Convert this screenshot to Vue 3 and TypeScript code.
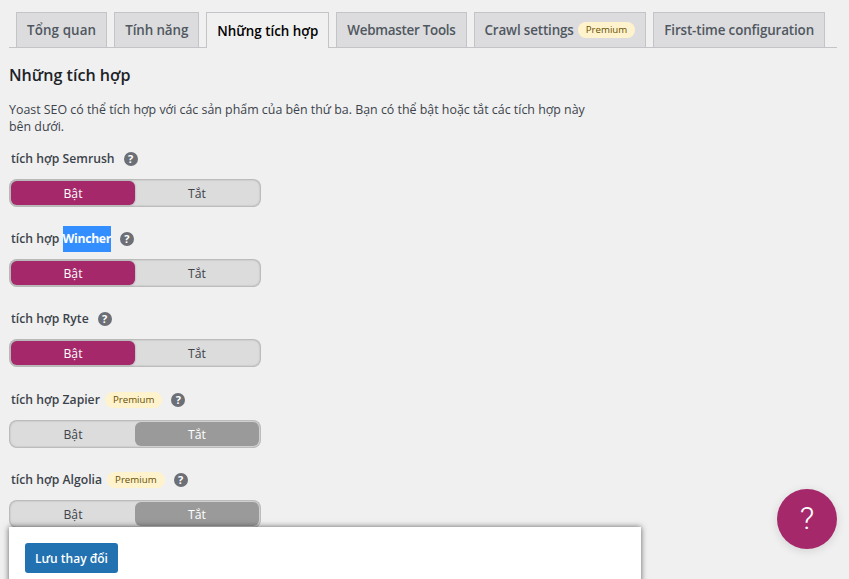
<script setup lang="ts">
interface Row { name: string; premium: boolean; on: boolean; selected?: boolean }
const tabs = [
  { label: 'Tổng quan', spacing: 0.1 },
  { label: 'Tính năng', spacing: -0.1 },
  { label: 'Những tích hợp', active: true, spacing: 0 },
  { label: 'Webmaster Tools', spacing: -0.27 },
  { label: 'Crawl settings', premium: true, spacing: -0.14 },
  { label: 'First-time configuration', spacing: -0.13 },
]
const rows: Row[] = [
  { name: 'Semrush', premium: false, on: true },
  { name: 'Wincher', premium: false, on: true, selected: true },
  { name: 'Ryte', premium: false, on: true },
  { name: 'Zapier', premium: true, on: false },
  { name: 'Algolia', premium: true, on: false },
]
</script>

<template>
  <div class="page">
    <nav class="tabs">
      <a
        v-for="t in tabs"
        :key="t.label"
        class="tab"
        :class="{ active: t.active }"
        :style="{ letterSpacing: t.spacing + 'px' }"
      >
        {{ t.label }}<span v-if="t.premium" class="badge tab-badge">Premium</span>
      </a>
    </nav>
    <h2 class="title">Những tích hợp</h2>
    <p class="desc">Yoast SEO có thể tích hợp với các sản phẩm của bên thứ ba. Bạn có thể bật hoặc tắt các tích hợp này bên dưới.</p>
    <div v-for="r in rows" :key="r.name" class="row" :class="{ isPremium: r.premium }">
      <div class="label">
        <span>tích hợp <span :class="{ sel: r.selected }">{{ r.name }}</span></span>
        <span v-if="r.premium" class="badge row-badge">Premium</span>
        <span class="hint">?</span>
      </div>
      <div class="toggle">
        <span class="opt" :class="{ onActive: r.on }">Bật</span>
        <span class="opt" :class="{ offActive: !r.on }">Tắt</span>
      </div>
    </div>
    <div class="savebar"><button class="save">Lưu thay đổi</button></div>
    <div class="beacon">?</div>
  </div>
</template>

<style>
html, body { margin: 0; background: #f0f0f1; }
</style>

<style scoped>
.page {
  position: relative;
  width: 849px;
  height: 579px;
  overflow: hidden;
  box-sizing: border-box;
  padding: 12px 12px 0 9px;
  background: #f0f0f1;
  font-family: "Open Sans", "Noto Sans", sans-serif;
  font-size: 12.5px;
  color: #3c434a;
}
.tabs {
  display: flex;
  gap: 7px;
  height: 35px;
  padding-left: 7px;
  border-bottom: 1px solid #c3c4c7;
}
.tab {
  display: flex;
  align-items: center;
  box-sizing: border-box;
  height: 35px;
  padding: 0 10px;
  border: 1px solid #c3c4c7;
  border-bottom: none;
  background: #dcdcde;
  color: #50575e;
  font-size: 13.4px;
  font-weight: 600;
  white-space: nowrap;
}
.tab.active {
  height: 36px;
  background: #f0f0f1;
  color: #000;
}
.badge {
  display: inline-block;
  background: #fff3cd;
  color: #674e00;
  border-radius: 8px;
  font-size: 9.7px;
  line-height: 16px;
  height: 16px;
  padding: 0 8px;
  font-weight: 400;
  letter-spacing: 0;
}
.tab-badge { margin-left: 4px; }
.title {
  margin: 16px 0 0;
  font-size: 16.1px;
  line-height: 23px;
  font-weight: 600;
  color: #1d2327;
}
.desc {
  margin: 14px 0 0;
  width: 600px;
  font-size: 12.4px;
  line-height: 17px;
}
.row { height: 80px; }
.label {
  display: flex;
  align-items: center;
  height: 21px;
  padding: 13px 0 0 2px;
  font-weight: 600;
  font-size: 12.2px;
  white-space: pre;
}
.isPremium .label { padding-top: 14px; }
.sel {
  display: inline-block;
  background: #338fff;
  color: #fff;
  font-weight: 700;
  letter-spacing: -0.3px;
  line-height: 26px;
}
.row-badge { margin-left: 5px; }
.hint {
  display: flex;
  align-items: center;
  justify-content: center;
  width: 14px;
  height: 14px;
  margin-left: 9px;
  border-radius: 50%;
  background: #6c6f75;
  color: #fff;
  font-size: 11px;
  font-weight: 700;
  line-height: 14px;
}
.toggle {
  display: flex;
  box-sizing: border-box;
  width: 252px;
  height: 28px;
  margin-top: 10px;
  padding: 2px;
  background: #dcdcdc;
  border-radius: 8px;
  box-shadow: inset 0 0 2px 1px rgba(0,0,0,.2);
}
.opt {
  flex: 1;
  display: flex;
  align-items: center;
  justify-content: center;
  border-radius: 6px;
  font-size: 12.2px;
  color: #3c434a;
}
.onActive { background: #a4286a; color: #fff; box-shadow: 0 0 2px rgba(0,0,0,.4); }
.offActive { background: #9a9a9a; color: #fff; }
.savebar {
  position: absolute;
  left: 9px;
  top: 527px;
  width: 632px;
  height: 60px;
  box-sizing: border-box;
  padding: 16px;
  background: #fff;
  box-shadow: 0 0 6px rgba(0,0,0,.6);
}
.save {
  display: block;
  width: 93px;
  height: 30px;
  padding: 0;
  border: none;
  border-radius: 3px;
  background: #2271b1;
  color: #fff;
  font-family: inherit;
  font-size: 12px;
  font-weight: 600;
}
.beacon {
  position: absolute;
  left: 777px;
  top: 489px;
  width: 60px;
  height: 60px;
  border-radius: 50%;
  background: #a4286a;
  color: #fff;
  font-family: Roboto, sans-serif;
  font-size: 32px;
  font-weight: 300;
  line-height: 58px;
  text-align: center;
  box-shadow: 0 2px 10px rgba(0,0,0,.12);
}
</style>
